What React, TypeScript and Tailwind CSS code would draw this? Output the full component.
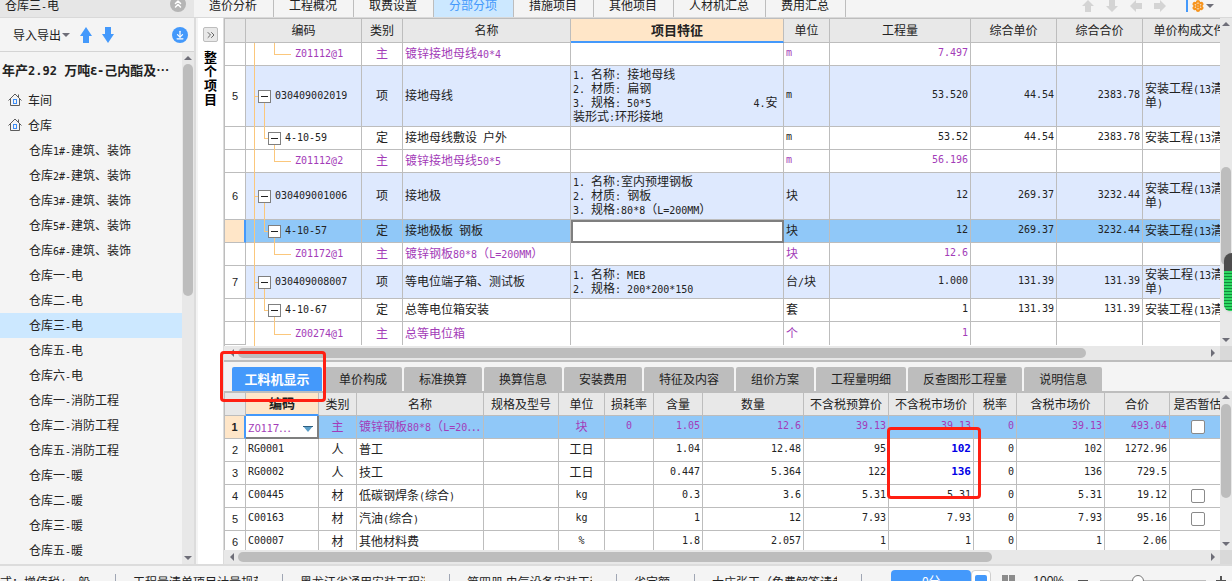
import React from 'react';
import { ArrowDownToLine, ChevronsRight, ChevronsUp, Settings } from 'lucide-react';
import clsx from 'clsx';

const mono = "font-['DejaVu_Sans_Mono',monospace] text-[10px]";

// Latin runs sit on a half-width grid next to the full-width Chinese glyphs
const Mixed: React.FC<{ text: string; latin?: string }> = ({ text, latin = 'text-[10px]' }) => (
  <>
    {text.split(/([\x20-\x7e]+)/).map((part, idx) =>
      idx % 2 === 1 ? (
        <span key={idx} className={clsx("font-['DejaVu_Sans_Mono',monospace] leading-none", latin)}>{part}</span>
      ) : (
        part
      )
    )}
  </>
);

const MAIN_TABS = ['造价分析', '工程概况', '取费设置', '分部分项', '措施项目', '其他项目', '人材机汇总', '费用汇总'];

const TREE = [
  '仓库1#-建筑、装饰', '仓库2#-建筑、装饰', '仓库3#-建筑、装饰', '仓库5#-建筑、装饰', '仓库6#-建筑、装饰',
  '仓库一-电', '仓库二-电', '仓库三-电', '仓库五-电', '仓库六-电',
  '仓库一-消防工程', '仓库二-消防工程', '仓库五-消防工程',
  '仓库一-暖', '仓库二-暖', '仓库三-暖', '仓库五-暖',
];

type Kind = '项' | '定' | '主';

interface Item {
  no?: string;
  code: string;
  kind: Kind;
  name: string;
  feature?: string;
  unit: string;
  qty: string;
  price?: string;
  total?: string;
  file?: string;
  height: string;
  selected?: boolean;
}

const FILE_NAME = '安装工程(13清单)';

const ITEMS: Item[] = [
  { code: 'Z01112@1', kind: '主', name: '镀锌接地母线40*4', unit: 'm', qty: '7.497', height: 'h-[23px]' },
  { no: '5', code: '030409002019', kind: '项', name: '接地母线', feature: '1. 名称: 接地母线\n2. 材质: 扁钢\n3. 规格: 50*5                 4.安\n装形式:环形接地', unit: 'm', qty: '53.520', price: '44.54', total: '2383.78', file: FILE_NAME, height: 'h-[61px]' },
  { code: '4-10-59', kind: '定', name: '接地母线敷设 户外', unit: 'm', qty: '53.52', price: '44.54', total: '2383.78', file: FILE_NAME, height: 'h-[23px]' },
  { code: 'Z01112@2', kind: '主', name: '镀锌接地母线50*5', unit: 'm', qty: '56.196', height: 'h-[23px]' },
  { no: '6', code: '030409001006', kind: '项', name: '接地极', feature: '1. 名称:室内预埋钢板\n2. 材质: 钢板\n3. 规格:80*8（L=200MM）', unit: '块', qty: '12', price: '269.37', total: '3232.44', file: FILE_NAME, height: 'h-[47px]' },
  { code: '4-10-57', kind: '定', name: '接地极板 钢板', unit: '块', qty: '12', price: '269.37', total: '3232.44', file: FILE_NAME, height: 'h-[23px]', selected: true },
  { code: 'Z01172@1', kind: '主', name: '镀锌钢板80*8（L=200MM）', unit: '块', qty: '12.6', height: 'h-[23px]' },
  { no: '7', code: '030409008007', kind: '项', name: '等电位端子箱、测试板', feature: '1. 名称: MEB\n2. 规格: 200*200*150', unit: '台/块', qty: '1.000', price: '131.39', total: '131.39', file: FILE_NAME, height: 'h-[33px]' },
  { code: '4-10-67', kind: '定', name: '总等电位箱安装', unit: '套', qty: '1', price: '131.39', total: '131.39', file: FILE_NAME, height: 'h-[23px]' },
  { code: 'Z00274@1', kind: '主', name: '总等电位箱', unit: '个', qty: '1', height: 'h-[23px]' },
];

const DETAIL_TABS = ['工料机显示', '单价构成', '标准换算', '换算信息', '安装费用', '特征及内容', '组价方案', '工程量明细', '反查图形工程量', '说明信息'];

const DETAIL_HEADS = ['编码', '类别', '名称', '规格及型号', '单位', '损耗率', '含量', '数量', '不含税预算价', '不含税市场价', '税率', '含税市场价', '合价', '是否暂估'];

// code, kind, name, spec, unit, loss, content, qty, budget, market, rate, taxed, total
const DETAILS: string[][] = [
  ['Z0117…', '主', '镀锌钢板80*8（L=20…', '', '块', '0', '1.05', '12.6', '39.13', '39.13', '0', '39.13', '493.04'],
  ['RG0001', '人', '普工', '', '工日', '', '1.04', '12.48', '95', '102', '0', '102', '1272.96'],
  ['RG0002', '人', '技工', '', '工日', '', '0.447', '5.364', '122', '136', '0', '136', '729.5'],
  ['C00445', '材', '低碳钢焊条(综合)', '', 'kg', '', '0.3', '3.6', '5.31', '5.31', '0', '5.31', '19.12'],
  ['C00163', '材', '汽油(综合)', '', 'kg', '', '1', '12', '7.93', '7.93', '0', '7.93', '95.16'],
  ['C00007', '材', '其他材料费', '', '%', '', '1.8', '2.057', '1', '1', '0', '1', '2.06'],
];
const CHECKABLE = [0, 3, 4];

const STATUS = ['工程量清单项目计量规范', '黑龙江省通用安装工程消', '第四册 电气设备安装工程', '省定额', '大庄张工（免费解答请参'];

const isLatin = (text: string) => /^[\x20-\x7e]+$/.test(text);

const Triangle: React.FC<{ dir: 'up' | 'down' | 'left' | 'right'; className?: string }> = ({ dir, className }) => {
  const points = { up: '4,2 8,6 0,6', down: '0,2 8,2 4,6', left: '2,4 6,0 6,8', right: '6,4 2,0 2,8' }[dir];
  return (
    <svg viewBox="0 0 8 8" className={clsx('size-2 shrink-0 fill-[#6e6e78]', className)} aria-hidden="true">
      <polygon points={points} />
    </svg>
  );
};

const Arrow: React.FC<{ className?: string }> = ({ className }) => (
  <svg viewBox="0 0 12 16" className={clsx('h-4 w-3 shrink-0 fill-current', className)} aria-hidden="true">
    <path d="M6 0 L12 9 H9 V16 H3 V9 H0 Z" />
  </svg>
);

const MoveArrow: React.FC<{ className?: string }> = ({ className }) => (
  <svg viewBox="0 0 12 12" className={clsx('size-3 shrink-0 fill-current', className)} aria-hidden="true">
    <path d="M6 0 L12 6 H9 V12 H3 V6 H0 Z" />
  </svg>
);

const HScroll: React.FC<{ thumb: string }> = ({ thumb }) => (
  <div className="flex h-[14px] shrink-0 bg-[#e8e8e8]">
    <div className="flex min-w-0 flex-1 items-center">
      <Triangle dir="left" className="ml-1 mr-0.5" />
      <div className="min-w-0 flex-1">
        <div className={clsx('h-[10px] rounded-full bg-[#bdbdbd]', thumb)} />
      </div>
      <Triangle dir="right" className="ml-0.5 mr-[3px]" />
    </div>
    <div className="w-3 bg-[#d9d9d9]" />
  </div>
);

const VScroll: React.FC<{ spacer: string; thumb: string }> = ({ spacer, thumb }) => (
  <div className="flex w-3 shrink-0 flex-col items-center bg-[#e8e8e8] py-0.5">
    <Triangle dir="up" />
    <div className={spacer} />
    <div className={clsx('w-[10px] rounded-full bg-[#bdbdbd]', thumb)} />
    <Triangle dir="down" className="mt-auto" />
  </div>
);

const House: React.FC = () => (
  <svg viewBox="0 0 14 14" className="size-[14px] shrink-0" fill="none" aria-hidden="true">
    <path d="M0.5 7.5 L7 1 L13.5 7.5 M2.5 6 V12.5 H11.5 V6 M10.5 1.5 V4" stroke="#5c5c5c" />
    <rect x="5.5" y="6.5" width="3" height="4" stroke="#3f8ef5" />
  </svg>
);

const Sidebar: React.FC = () => (
  <aside className="flex w-[196px] shrink-0 flex-col border-r-2 border-[#dcdcdc] bg-[#f4f4f4]">
    <div className="flex h-[18px] shrink-0 items-start justify-between border-b border-[#d9d9d9] bg-[#e6e6e6] pl-[5px] pr-2">
      <span className="leading-[10px]"><Mixed text="仓库三-电" /></span>
      <button aria-label="收起" className="-mt-1 flex size-4 items-center justify-center rounded-full bg-[#b5b5b5] text-white">
        <ChevronsUp className="size-3" strokeWidth={3} />
      </button>
    </div>
    <div className="flex h-[34px] shrink-0 items-center border-b border-[#d4d4d4] pl-[13px] pr-1.5">
      <button className="flex items-center gap-px">
        导入导出
        <Triangle dir="down" className="mt-px" />
      </button>
      <button aria-label="上移" className="ml-2.5 text-[#4499fb]"><Arrow /></button>
      <button aria-label="下移" className="ml-2.5 text-[#4499fb]"><Arrow className="rotate-180" /></button>
      <button aria-label="下载" className="ml-auto flex size-4 items-center justify-center rounded-full bg-[#4499fb] text-white">
        <ArrowDownToLine className="size-2.5" strokeWidth={3} />
      </button>
    </div>
    <div className="flex min-h-0 flex-1">
      <nav className="min-w-0 flex-1 overflow-hidden whitespace-nowrap">
        <h1 className="flex h-9 items-center pl-0.5 text-[13px] font-bold">
          <span className="whitespace-pre"><Mixed text="年产2.92 万吨ε-己内酯及…" latin="text-[12px]" /></span>
        </h1>
        <ul>
          {['车间', '仓库'].map((name) => (
            <li key={name} className="flex h-[25px] items-center gap-1.5 pb-0.5 pl-2">
              <House />
              {name}
            </li>
          ))}
          {TREE.map((name) => (
            <li key={name} className={clsx('flex h-[25px] items-center pb-0.5 pl-[29px]', name === '仓库三-电' && 'bg-[#cce8ff]')}>
              <span><Mixed text={name} /></span>
            </li>
          ))}
        </ul>
      </nav>
      <VScroll spacer="h-0.5" thumb="h-[232px]" />
    </div>
  </aside>
);

const TopBar: React.FC = () => (
  <header className="-ml-0.5 flex h-[18px] shrink-0 items-start border-b border-[#d9d9d9] bg-[#f4f4f4]">
    {MAIN_TABS.map((tab) => (
      <button
        key={tab}
        className={clsx('h-[17px] shrink-0 border-r border-[#bdbdbd] pb-[7px] pl-[15px] pr-4 leading-[10px]', tab === '分部分项' && 'bg-[#cce8ff] text-[#4499fb]')}
      >
        {tab}
      </button>
    ))}
    <div className="ml-auto flex items-center gap-3 pr-[18px] text-[#d4d4d4]">
      <button aria-label="上移"><MoveArrow /></button>
      <button aria-label="下移"><MoveArrow className="rotate-180" /></button>
      <button aria-label="升级"><MoveArrow className="-rotate-90" /></button>
      <button aria-label="降级"><MoveArrow className="rotate-90" /></button>
      <button aria-label="设置" className="ml-2 flex items-center">
        <span className="mr-1 h-3 w-0.5 bg-[#4499fb]" />
        <Settings className="size-3 text-[#f7941d]" strokeWidth={4} />
        <Triangle dir="down" className="ml-0.5" />
      </button>
    </div>
  </header>
);

const Toggle: React.FC = () => (
  <button aria-label="折叠" className="relative flex size-[13px] shrink-0 items-center justify-center border border-[#7f7f7f] bg-white">
    <span className="h-px w-[7px] bg-[#222]" />
  </button>
);

const line = 'absolute bg-[#fbc77c]';

const CodeCell: React.FC<{ item: Item }> = ({ item }) => (
  <>
    <span className={clsx(line, 'left-2 top-0 -bottom-px w-px')} />
    {item.kind === '项' && (
      <>
        <span className={clsx(line, 'left-2 top-1/2 h-px w-1')} />
        <span className={clsx(line, 'left-[18px] top-1/2 -bottom-px w-px')} />
        <div className="flex items-center gap-1 pl-3"><Toggle /><Mixed text={item.code} /></div>
      </>
    )}
    {item.kind === '定' && (
      <>
        <span className={clsx(line, 'left-[18px] top-0 h-1/2 w-px')} />
        <span className={clsx(line, 'left-[18px] top-1/2 h-px w-1')} />
        <span className={clsx(line, 'left-7 top-1/2 -bottom-px w-px')} />
        <div className="flex items-center gap-1 pl-[22px]"><Toggle /><Mixed text={item.code} /></div>
      </>
    )}
    {item.kind === '主' && (
      <>
        <span className={clsx(line, 'left-7 top-0 h-1/2 w-px')} />
        <span className={clsx(line, 'left-7 top-1/2 h-px w-[17px]')} />
        <div className="flex items-center pl-[49px]"><Mixed text={item.code} /></div>
      </>
    )}
  </>
);

const cell = 'overflow-hidden border-b border-r border-[#bdbdbd] px-0.5 pb-0.5 group-last:border-b-0';
const head = 'border-b border-r border-[#bdbdbd] bg-[#e8e8e8] pb-px font-normal';
const headActive = 'border-b-2 border-r border-b-[#4499fb] border-r-[#bdbdbd] bg-[#ffe6c8] pb-px text-[13px] font-bold';
const rowNo = "border-b border-r border-[#bdbdbd] text-center font-['Liberation_Sans',sans-serif] text-[11px] text-[#222]";

const ItemTable: React.FC = () => (
  <table className="w-[calc(100%+17px)] table-fixed border-separate border-spacing-0">
    <colgroup>
      <col className="w-[21px]" />
      <col className="w-[116px]" />
      <col className="w-[41px]" />
      <col className="w-[168px]" />
      <col />
      <col className="w-[46px]" />
      <col className="w-[141px]" />
      <col className="w-[86px]" />
      <col className="w-[86px]" />
      <col className="w-[94px]" />
    </colgroup>
    <thead>
      <tr className="h-6">
        {['', '编码', '类别', '名称', '项目特征', '单位', '工程量', '综合单价', '综合合价', '单价构成文件'].map((title) => (
          <th key={title} className={title === '项目特征' ? headActive : head}>{title}</th>
        ))}
      </tr>
    </thead>
    <tbody>
      {ITEMS.map((item) => (
        <tr
          key={item.code}
          className={clsx(
            'group',
            item.height,
            item.kind === '项' && 'bg-[#dee9fe]',
            item.kind === '主' && 'text-[#a33cb8]',
            item.selected && 'bg-[#90c8f8]'
          )}
        >
          <td className={clsx(rowNo, item.selected ? 'border-r-2 border-r-[#4499fb] bg-[#ffe6c8]' : 'bg-white')}>{item.no}</td>
          <td className="relative border-b border-r border-[#bdbdbd] group-last:border-b-0"><CodeCell item={item} /></td>
          <td className={clsx(cell, 'text-center')}>{item.kind}</td>
          <td className={clsx(cell, 'whitespace-pre')}><Mixed text={item.name} /></td>
          {item.selected ? (
            <td className="p-0">
              <input aria-label="项目特征" className="block h-[23px] w-full border-2 border-[#7f7f7f] bg-white px-0.5 outline-none" />
            </td>
          ) : (
            <td className={clsx(cell, 'whitespace-pre')}><Mixed text={item.feature ?? ''} /></td>
          )}
          <td className={clsx(cell, isLatin(item.unit) && mono)}>
            {isLatin(item.unit) ? item.unit : <Mixed text={item.unit} />}
          </td>
          <td className={clsx(cell, mono, 'text-right')}>{item.qty}</td>
          <td className={clsx(cell, mono, 'text-right')}>{item.price}</td>
          <td className={clsx(cell, mono, 'text-right')}>{item.total}</td>
          <td className={clsx(cell, item.kind === '定' && 'whitespace-nowrap')}><Mixed text={item.file ?? ''} /></td>
        </tr>
      ))}
    </tbody>
  </table>
);

const DetailTable: React.FC = () => (
  <table className="w-[calc(100%+6px)] table-fixed border-separate border-spacing-0">
    <colgroup>
      <col className="w-[21px]" />
      <col className="w-[73px]" />
      <col className="w-[38px]" />
      <col />
      <col className="w-[75px]" />
      <col className="w-[46px]" />
      <col className="w-[49px]" />
      <col className="w-[49px]" />
      <col className="w-[101px]" />
      <col className="w-[85px]" />
      <col className="w-[85px]" />
      <col className="w-[43px]" />
      <col className="w-[88px]" />
      <col className="w-[65px]" />
      <col className="w-[56px]" />
    </colgroup>
    <thead>
      <tr className="h-[23px]">
        <th className={head} />
        {DETAIL_HEADS.map((title, idx) => (
          <th key={title} className={clsx('whitespace-nowrap', idx === 0 ? headActive : head)}>{title}</th>
        ))}
      </tr>
    </thead>
    <tbody>
      {DETAILS.map((row, idx) => (
        <tr key={row[0]} className={clsx('h-[23px]', idx === 0 && 'bg-[#90c8f8] text-[#a33cb8]')}>
          <td className={clsx(rowNo, idx === 0 ? 'border-r-2 border-r-[#4499fb] bg-[#ffe6c8] font-bold' : 'bg-white')}>{idx + 1}</td>
          {row.map((value, col) => {
            if (idx === 0 && col === 0) {
              return (
                <td key={col} className="relative p-0">
                  <select aria-label="编码" className="block h-[23px] w-full appearance-none border-b-2 border-r-2 border-[#7f7f7f] bg-white pl-0.5 text-[11px]">
                    <option>{value}</option>
                  </select>
                  <svg viewBox="0 0 10 6" className="pointer-events-none absolute right-1.5 top-2.5 h-1.5 w-2.5" aria-hidden="true">
                    <path d="M0 0 H10 L5 6 Z" fill="#5b9fc9" />
                    <path d="M0 0.5 H10" stroke="#2f5f80" />
                  </svg>
                </td>
              );
            }
            const marked = col === 9 && (idx === 1 || idx === 2);
            return (
              <td
                key={col}
                className={clsx(
                  'border-b border-r border-[#bdbdbd] px-0.5 pb-0.5 whitespace-nowrap',
                  [1, 4, 5].includes(col) && 'text-center',
                  col > 5 && 'text-right',
                  marked && "relative font-['DejaVu_Sans_Mono',monospace] text-[11px] font-bold text-[#0000e6]",
                  !marked && isLatin(value) && mono
                )}
              >
                {isLatin(value) ? value : <Mixed text={value} />}
                {marked && idx === 1 && (
                  <span className="pointer-events-none absolute -left-0.5 -top-3 z-10 h-[72px] w-[94px] rounded-sm border-3 border-[#ff1f12]" />
                )}
              </td>
            );
          })}
          <td className="border-b border-r border-[#bdbdbd]">
            {CHECKABLE.includes(idx) && (
              <input type="checkbox" aria-label={`是否暂估 ${row[0]}`} className="mx-auto block size-[14px] appearance-none rounded-xs border border-[#8a8a8a] bg-white" />
            )}
          </td>
        </tr>
      ))}
    </tbody>
  </table>
);

const StatusBar: React.FC = () => (
  <footer className="h-[17px] shrink-0 overflow-hidden border-t-2 border-[#dcdcdc] bg-[#f4f4f4]">
    <div className="flex h-8 items-center whitespace-nowrap">
      <div className="h-4 w-[116px] shrink-0 border-r border-[#a0a6b4] leading-4">
        <div className="w-[90px] overflow-hidden">式：增值税<Mixed text="(" />一般计税</div>
      </div>
      {STATUS.map((text) => (
        <div key={text} className="h-4 shrink-0 border-r border-[#a0a6b4] pl-[17px] pr-6 leading-4">
          <div className="max-w-[125px] overflow-hidden">{text}</div>
        </div>
      ))}
      <div className="ml-auto flex items-center pb-0.5 pr-1.5">
        <button className="h-[22px] w-20 rounded-t-sm bg-[#4499fb] text-white">0分</button>
        <button aria-label="单页" className="flex h-[22px] w-5 items-center justify-center rounded-sm border border-[#cfcfcf] bg-white">
          <span className="size-3 rounded-xs bg-[#4499fb]" />
        </button>
        <button aria-label="双页" className="ml-[11px] flex gap-px">
          <span className="h-3 w-1.5 bg-[#8c8c8c]" />
          <span className="h-3 w-1.5 bg-[#8c8c8c]" />
        </button>
        <span className="ml-[18px] font-['Liberation_Sans',sans-serif]">100%</span>
        <button aria-label="缩小" className="ml-3.5 h-0.5 w-2.5 bg-[#555]" />
        <div className="ml-3 flex items-center">
          <span className="h-0.5 w-8 bg-[#bdbdbd]" />
          <span className="size-3 rounded-full border border-[#777] bg-white" />
          <span className="h-0.5 w-[62px] bg-[#bdbdbd]" />
        </div>
        <button aria-label="放大" className="ml-2.5">
          <svg viewBox="0 0 10 10" className="size-2.5" stroke="#555" strokeWidth="2" aria-hidden="true">
            <path d="M5 0 V10 M0 5 H10" />
          </svg>
        </button>
      </div>
    </div>
  </footer>
);

const App: React.FC = () => (
  <div className="flex h-screen flex-col overflow-hidden bg-[#f4f4f4] font-['Noto_Sans_CJK_SC',sans-serif] text-xs leading-[14px] text-[#222]">
    <div className="flex min-h-0 flex-1">
      <Sidebar />
      <main className="flex min-w-0 flex-1 flex-col">
        <TopBar />
        <div className="flex min-h-0 flex-1">
          <div className="ml-0.5 flex w-[25px] shrink-0 flex-col items-center bg-white pt-[9px]">
            <button aria-label="展开" className="flex size-[15px] items-center justify-center rounded-xs border border-[#bdbdbd] bg-[#e8e8e8]">
              <ChevronsRight className="size-3 text-[#666]" />
            </button>
            <div className="mt-2 w-[13px] text-[13px] font-bold text-black">整个项目</div>
          </div>
          <div className="flex min-w-0 flex-1 flex-col border-l border-[#dcdcdc]">
            <section className="flex min-h-0 flex-1">
              <div className="min-w-0 flex-1 overflow-hidden border-l border-t border-[#bdbdbd] bg-white">
                <ItemTable />
              </div>
              <div className="relative flex">
                <VScroll spacer="h-[139px]" thumb="h-[98px]" />
                <div className="absolute right-0 top-[235px] h-[58px] w-2 rounded-l-full bg-[#4d4d4d] pt-[18px] shadow">
                  <div className="h-10 rounded-bl-md bg-[repeating-linear-gradient(#2fd862_0_2px,#128a3a_2px_3px)]" />
                </div>
              </div>
            </section>
            <HScroll thumb="w-7/8" />
            <section className="shrink-0 border-t-2 border-[#bdbdbd]">
              <div className="flex gap-0.5 pl-2 pt-[5px]">
                {DETAIL_TABS.map((tab, idx) => (
                  <div key={tab} className="relative">
                    <button className={clsx('h-6 rounded-t-xs', idx === 0 ? 'w-[90px] bg-[#4499fb] text-[13px] font-bold text-white' : 'bg-[#bdbdbd] px-[15px]')}>
                      {tab}
                    </button>
                    {idx === 0 && (
                      <span className="pointer-events-none absolute -left-3 -top-4 z-10 h-[51px] w-[106px] rounded-sm border-3 border-[#ff1f12]" />
                    )}
                  </div>
                ))}
              </div>
              <div className="flex h-[159px]">
                <div className="min-w-0 flex-1 overflow-hidden border-l border-t-2 border-[#bdbdbd] bg-white">
                  <DetailTable />
                </div>
                <VScroll spacer="h-[3px]" thumb="h-[94px]" />
              </div>
              <HScroll thumb="w-7/9" />
            </section>
          </div>
        </div>
      </main>
    </div>
    <StatusBar />
  </div>
);

export default App;
